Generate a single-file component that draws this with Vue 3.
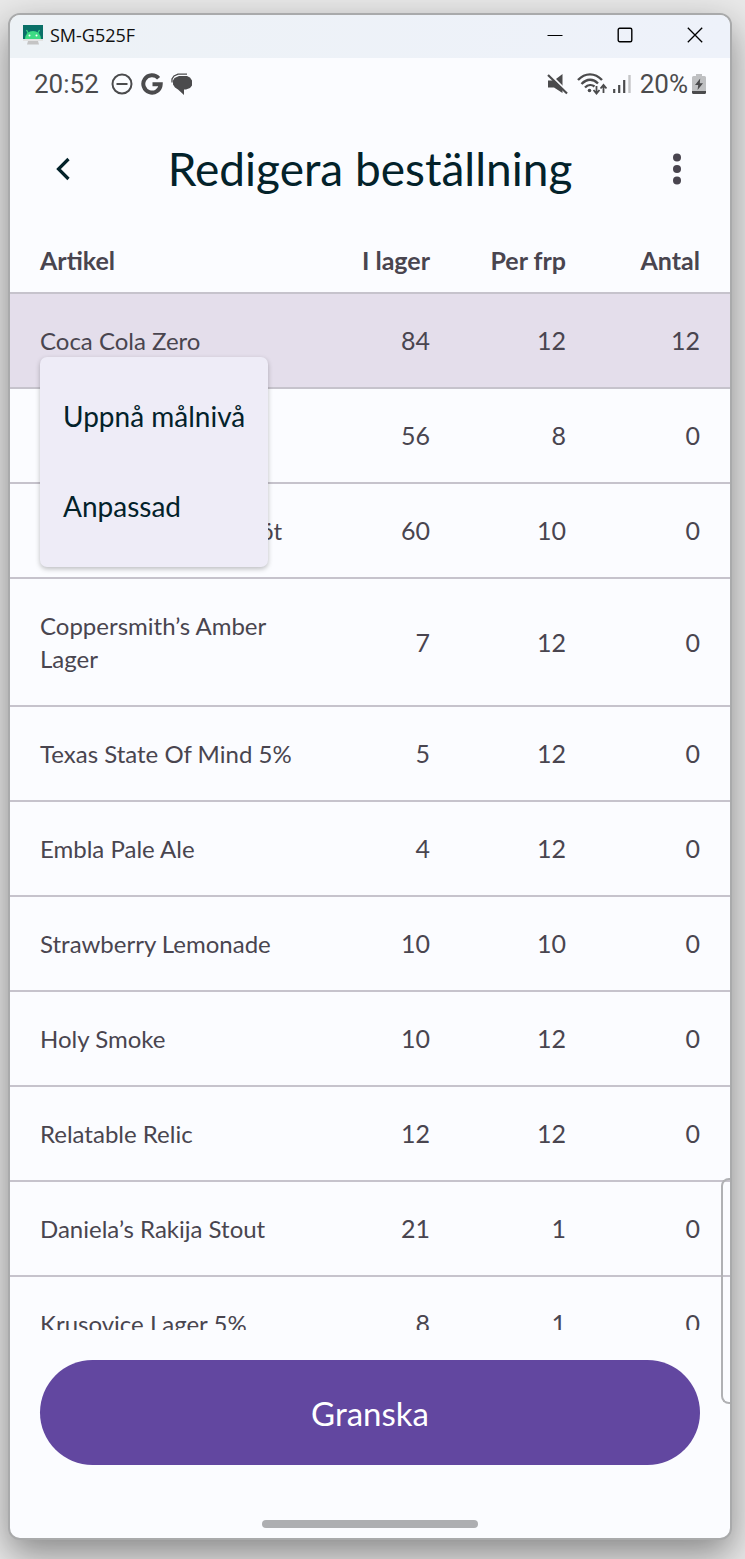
<script setup>
import { ref } from 'vue'

const rows = ref([
  { name: 'Coca Cola Zero', stock: 84, pack: 12, count: 12, selected: true },
  { name: '', stock: 56, pack: 8, count: 0 },
  { name: 'öt', stock: 60, pack: 10, count: 0, trailing: true },
  { name: 'Coppersmith’s Amber Lager', stock: 7, pack: 12, count: 0 },
  { name: 'Texas State Of Mind 5%', stock: 5, pack: 12, count: 0 },
  { name: 'Embla Pale Ale', stock: 4, pack: 12, count: 0 },
  { name: 'Strawberry Lemonade', stock: 10, pack: 10, count: 0 },
  { name: 'Holy Smoke', stock: 10, pack: 12, count: 0 },
  { name: 'Relatable Relic', stock: 12, pack: 12, count: 0 },
  { name: 'Daniela’s Rakija Stout', stock: 21, pack: 1, count: 0 },
  { name: 'Krusovice Lager 5%', stock: 8, pack: 1, count: 0 },
])
</script>

<template>
  <div class="desktop">
    <div class="window">
      <header class="titlebar">
        <svg class="app-icon" width="20" height="20" viewBox="0 0 20 20" aria-hidden="true">
          <rect width="20" height="14" fill="#0a7068" />
          <path d="M2 14a8 8 0 0 1 16 0z" fill="#3ddc84" />
          <path d="M5.500 8.500L3.500 5M14.500 8.500L16.500 5" stroke="#3ddc84" stroke-width="1.200" />
          <circle cx="6.500" cy="10.500" r="1" fill="#fff" />
          <circle cx="13.500" cy="10.500" r="1" fill="#fff" />
          <rect y="14" width="20" height="2" fill="#e2e2e2" />
          <path d="M5 16h10l1 3.500H4z" fill="#c4c4c4" />
        </svg>
        <span class="window-title">SM-G525F</span>
        <div class="window-buttons">
          <button type="button" aria-label="Minimera">
            <svg width="16" height="16" viewBox="0 0 16 16"><path d="M0.500 8.500h15" stroke="#000" stroke-width="1.200" /></svg>
          </button>
          <button type="button" aria-label="Maximera">
            <svg width="16" height="16" viewBox="0 0 16 16"><rect x="1.200" y="1.200" width="13.600" height="13.600" rx="1.500" fill="none" stroke="#000" stroke-width="1.400" /></svg>
          </button>
          <button type="button" aria-label="Stäng">
            <svg width="16" height="16" viewBox="0 0 16 16"><path d="M0.800 0.800l14.400 14.400M15.200 0.800L0.800 15.200" stroke="#000" stroke-width="1.300" /></svg>
          </button>
        </div>
      </header>

      <div class="statusbar">
        <div class="status-group">
          <span>20:52</span>
          <svg class="dnd" width="22" height="22" viewBox="0 0 22 22" aria-hidden="true">
            <circle cx="11" cy="11" r="9.500" fill="none" stroke="#4b4b4d" stroke-width="2" />
            <path d="M5.500 11h11" stroke="#4b4b4d" stroke-width="2" />
          </svg>
          <svg width="22" height="22" viewBox="0 0 22 22" aria-hidden="true">
            <path d="M17.600 5.200A8.700 8.700 0 1 0 19.700 11.300H11.500" fill="none" stroke="#4b4b4d" stroke-width="4" />
          </svg>
          <svg width="22" height="22" viewBox="0 0 22 22" aria-hidden="true">
            <path d="M8 3h8l3 1.500 2 3v5l-2 2.500-4 1.500h-2V22l-6-5.500-3-2-2-3V7.500l1.500-2.500z" fill="#4b4b4d" />
            <path d="M1 9.500V6l2-3 4-1.800h9" fill="none" stroke="#4b4b4d" stroke-width="1.300" />
          </svg>
        </div>
        <div class="status-group right">
          <svg width="22" height="22" viewBox="0 0 22 22" aria-hidden="true">
            <path d="M1 7.500h6L15.500 1v19L7 14.500H1z" fill="#4b4b4d" />
            <path d="M1.500 0L21 19.500" stroke="#fbfcff" stroke-width="2.200" />
            <path d="M1 2L20 20.500" stroke="#4b4b4d" stroke-width="2.200" />
          </svg>
          <svg class="wifi" width="30" height="22" viewBox="0 0 30 22" aria-hidden="true">
            <g fill="none" stroke="#4b4b4d" stroke-width="2.400">
              <path d="M1 7C8 -0.500 18 -0.500 25 7" />
              <path d="M4.500 11C10 5.500 16 5.500 21 10.500" />
              <path d="M8 14.500C11 11.500 15 11.500 17.500 13.500" />
              <path d="M19.500 13v7M16.500 17l3 3.500 3-3.500M26.500 20v-7M23.500 15.500l3-3.500 3 3.500" stroke-width="1.800" />
            </g>
            <circle cx="12.500" cy="17.500" r="1.800" fill="#4b4b4d" />
          </svg>
          <svg class="signal" width="18" height="20" viewBox="0 0 18 20" aria-hidden="true">
            <path d="M1.200 15v4M6.200 11v8M11.200 6v13" stroke="#4b4b4d" stroke-width="2.200" />
            <path d="M16.500 1v18" stroke="#c4c5c7" stroke-width="2.400" />
          </svg>
          <span>20%</span>
          <svg class="battery" width="14" height="20" viewBox="0 0 14 20" aria-hidden="true">
            <path d="M4 0h6v2h2.500q1.500 0 1.500 1.500V17H0V3.500Q0 2 1.500 2H4z" fill="#bfc0c2" />
            <path d="M0 17h14v1.500q0 1.500-1.500 1.500h-11Q0 20 0 18.500z" fill="#4b4b4d" />
            <path d="M8.200 4.500L3 11h3.200l-0.600 5L11 9.300H7.800z" fill="#4b4b4d" />
          </svg>
        </div>
      </div>

      <div class="appbar">
        <button type="button" aria-label="Tillbaka">
          <svg width="16" height="24" viewBox="0 0 16 24"><path d="M13.500 2L3.500 12l10 10" fill="none" stroke="#03222a" stroke-width="3.200" /></svg>
        </button>
        <h1>Redigera beställning</h1>
        <button type="button" aria-label="Fler alternativ">
          <svg width="8" height="32" viewBox="0 0 8 32" fill="#49454f"><circle cx="4" cy="4.500" r="4" /><circle cx="4" cy="16" r="4" /><circle cx="4" cy="27.500" r="4" /></svg>
        </button>
      </div>

      <main class="list">
        <table>
          <colgroup>
            <col />
            <col class="col-stock" />
            <col class="col-pack" />
            <col class="col-count" />
          </colgroup>
          <thead>
            <tr>
              <th scope="col">Artikel</th>
              <th scope="col">I lager</th>
              <th scope="col">Per frp</th>
              <th scope="col">Antal</th>
            </tr>
          </thead>
          <tbody>
            <tr v-for="(row, i) in rows" :key="i" :class="{ selected: row.selected }">
              <td :class="{ trailing: row.trailing, anchor: row.selected }">
                {{ row.name }}
                <div v-if="row.selected" class="menu" role="menu">
                  <button type="button" role="menuitem">Uppnå målnivå</button>
                  <button type="button" role="menuitem">Anpassad</button>
                </div>
              </td>
              <td>{{ row.stock }}</td>
              <td>{{ row.pack }}</td>
              <td>{{ row.count }}</td>
            </tr>
          </tbody>
        </table>
      </main>

      <footer class="footer">
        <button type="button" class="review">Granska</button>
        <div class="home-handle"></div>
      </footer>

      <div class="edge-panel"></div>
    </div>
  </div>
</template>

<style>
body {
  background: #e9e9e9;
}
</style>

<style scoped>
.desktop {
  box-sizing: border-box;
  height: 100vh;
  padding: 13px 13px 19px 8px;
  overflow: hidden;
  font-family: Lato, "Liberation Sans", sans-serif;
}
.window {
  position: relative;
  box-sizing: border-box;
  height: 100%;
  display: flex;
  flex-direction: column;
  overflow: hidden;
  border: 2px solid #a9aaab;
  border-radius: 12px;
  background: #fbfcff;
  box-shadow: 0 14px 36px rgba(0, 0, 0, 0.42);
}
button {
  margin: 0;
  padding: 0;
  border: 0;
  background: none;
  font: inherit;
  color: inherit;
}
svg {
  display: block;
  flex: none;
}
.titlebar {
  box-sizing: border-box;
  display: flex;
  align-items: center;
  flex: none;
  height: 43px;
  padding: 0 0 3px 13px;
  background: linear-gradient(90deg, #edf2f6, #eef2fa);
}
.window-title {
  margin-left: 7px;
  font: 18px/24px "Open Sans", "Noto Sans", sans-serif;
  color: #111;
}
.window-buttons {
  display: flex;
  margin-left: auto;
}
.window-buttons button {
  display: grid;
  place-items: center;
  width: 70px;
  height: 40px;
}
.statusbar {
  display: flex;
  align-items: center;
  justify-content: space-between;
  flex: none;
  height: 52px;
  padding: 0 24px;
  font: 26px/32px Roboto, sans-serif;
  color: #4b4b4d;
}
.status-group {
  display: flex;
  align-items: center;
  gap: 8px;
}
.dnd {
  margin-left: 4px;
}
.status-group.right {
  gap: 4px;
}
.wifi {
  margin-left: 4px;
}
.signal {
  margin: 0 5px 0 2px;
}
.appbar {
  display: flex;
  align-items: center;
  flex: none;
  height: 118px;
  padding: 0 18px;
}
.appbar button {
  display: grid;
  place-items: center;
  width: 70px;
  height: 70px;
}
h1 {
  flex: 1;
  margin: 0;
  font-size: 46px;
  line-height: 56px;
  font-weight: 400;
  text-align: center;
  color: #03222a;
}
.list {
  flex: 1;
  min-height: 0;
  overflow: hidden;
}
table {
  width: 100%;
  table-layout: fixed;
  border-collapse: separate;
  border-spacing: 0;
  font-size: 25px;
  line-height: 33px;
  color: #49454f;
}
.col-stock {
  width: 130px;
}
.col-pack {
  width: 136px;
}
.col-count {
  width: 164px;
}
th,
td {
  border-bottom: 2px solid #c6c3cc;
  text-align: right;
}
th {
  padding: 16px 0 15px;
  font-weight: 700;
}
td {
  padding: 30px 0;
}
th:first-child,
td:first-child {
  padding-left: 30px;
  text-align: left;
}
td:first-child {
  font-size: 24px;
}
th:last-child,
td:last-child {
  padding-right: 30px;
}
td.trailing:first-child {
  padding-left: 250px;
}
.selected td {
  background: #e4deeb;
}
.anchor {
  position: relative;
}
.menu {
  position: absolute;
  z-index: 1;
  top: 63px;
  left: 30px;
  display: flex;
  flex-direction: column;
  padding: 15px 0;
  border-radius: 7px;
  background: #eeecf7;
  box-shadow: 0 2px 5px rgba(0, 0, 0, 0.25);
}
.menu button {
  height: 90px;
  padding: 0 23px 2px;
  font-size: 28px;
  text-align: left;
  white-space: nowrap;
  color: #03222a;
}
.footer {
  display: flex;
  flex-direction: column;
  flex: none;
  align-items: center;
  padding: 30px 30px 10px;
}
.review {
  width: 100%;
  height: 105px;
  margin-bottom: 55px;
  border-radius: 53px;
  background: #6247a0;
  font-size: 33px;
  color: #fff;
}
.home-handle {
  width: 216px;
  height: 8px;
  border-radius: 4px;
  background: #adaeb1;
}
.edge-panel {
  position: absolute;
  right: -2px;
  bottom: 134px;
  box-sizing: border-box;
  width: 11px;
  height: 226px;
  border: 2px solid #b0b1b4;
  border-right: 0;
  border-radius: 8px 0 0 8px;
}
</style>
